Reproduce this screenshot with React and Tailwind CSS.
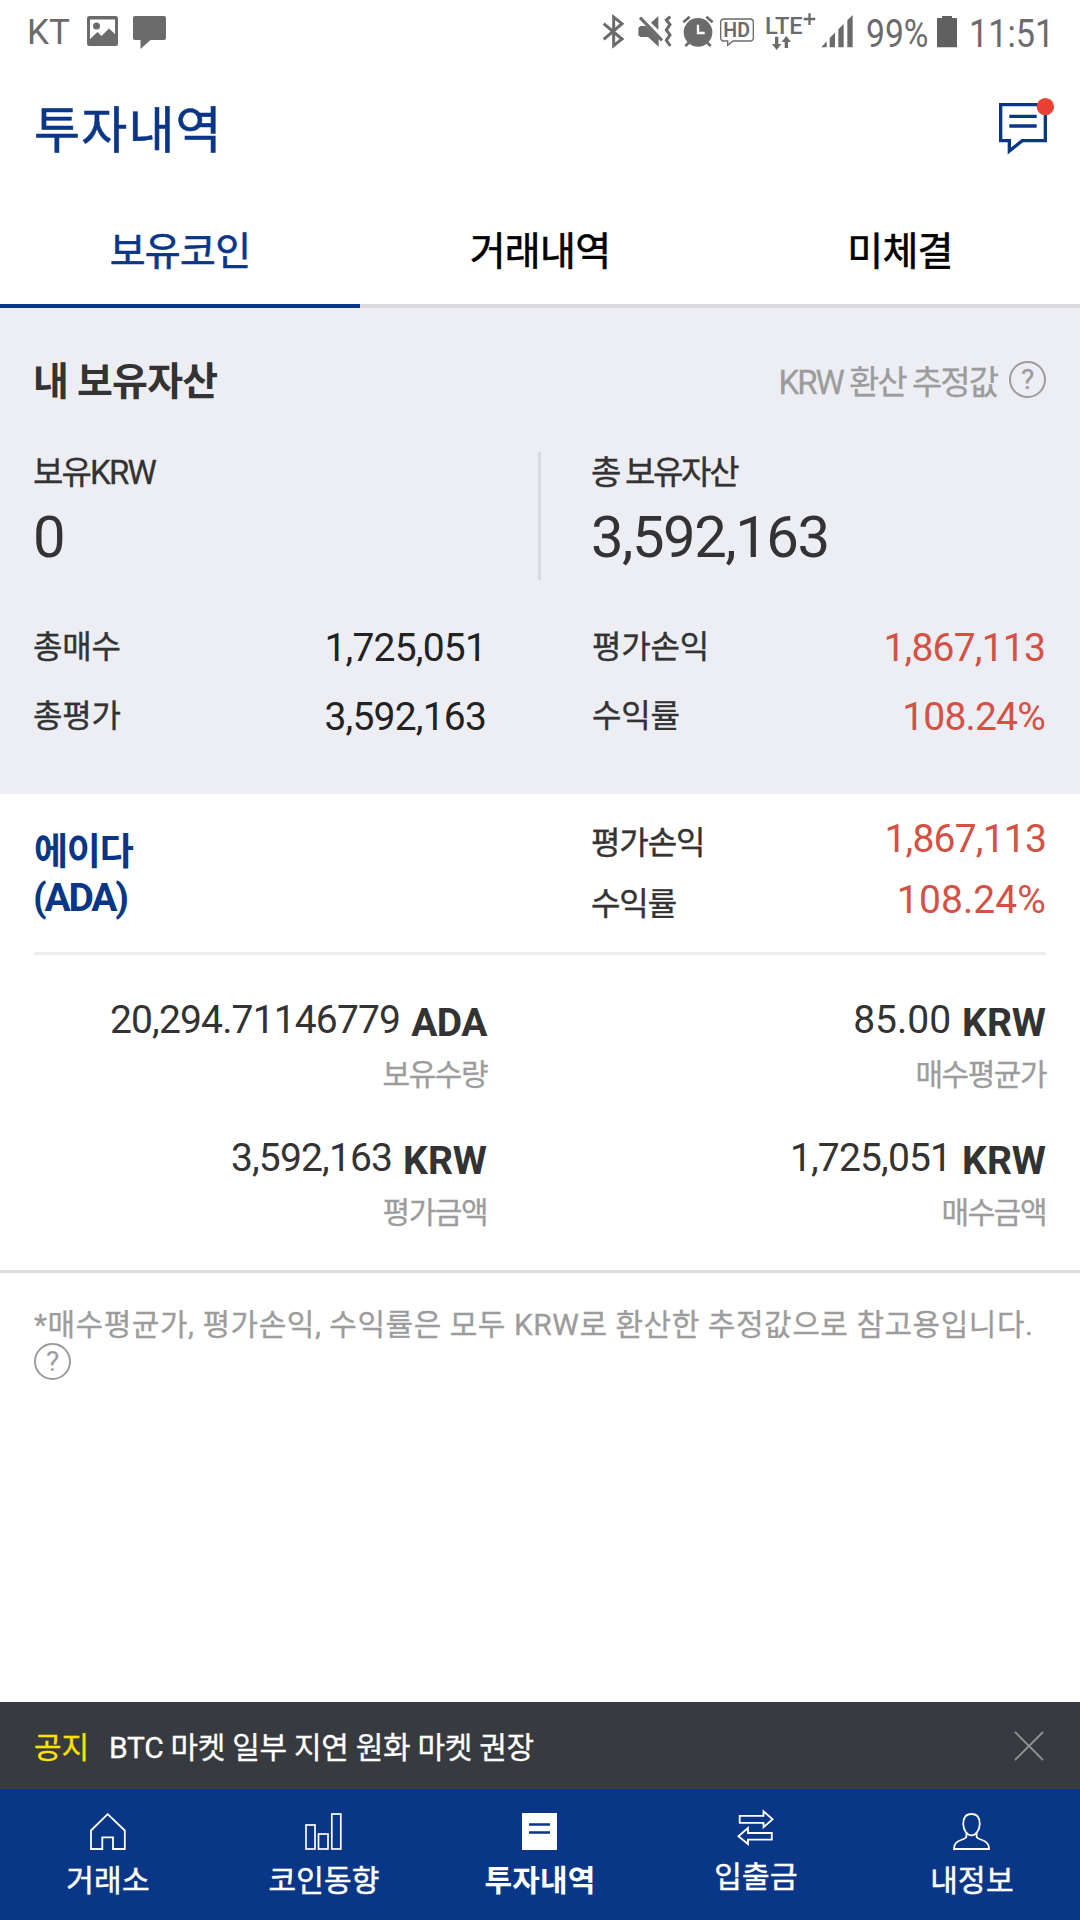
import React from "react";
import { useState } from "react";

const navItems = [
  { key: "exchange", label: "거래소", icon: HomeIcon },
  { key: "trend", label: "코인동향", icon: TrendIcon },
  { key: "invest", label: "투자내역", icon: InvestIcon },
  { key: "transfer", label: "입출금", icon: TransferIcon, raised: true },
  { key: "my", label: "내정보", icon: MyIcon },
];

const tabs = ["보유코인", "거래내역", "미체결"];

const amounts = [
  { value: "20,294.71146779", unit: "ADA", label: "보유수량", tight: true },
  { value: "85.00", unit: "KRW", label: "매수평균가" },
  { value: "3,592,163", unit: "KRW", label: "평가금액", tight: true },
  { value: "1,725,051", unit: "KRW", label: "매수금액", tight: true },
];

function HomeIcon() {
  return (
    <svg width="36" height="37" viewBox="0 0 36 37" fill="none" stroke="white" strokeWidth="1.8">
      <path d="M17.7 1.2 1 17.5V36H12.3V24.3H23V36H34.8V17.5Z" />
    </svg>
  );
}

function TrendIcon() {
  return (
    <svg width="37" height="37" viewBox="0 0 37 37" fill="none" stroke="white" strokeWidth="1.7">
      <rect x="1" y="12" width="9" height="24" />
      <rect x="13.5" y="21" width="9.5" height="15" />
      <rect x="26.8" y="1" width="9" height="35" />
    </svg>
  );
}

function InvestIcon() {
  return (
    <svg width="36" height="37" viewBox="0 0 36 37">
      <path d="M0 0H35V37H0Z" fill="white" />
      <path d="M7 11.5H28M7 19.5H28" stroke="#0a3687" strokeWidth="2.6" />
    </svg>
  );
}

function TransferIcon() {
  return (
    <svg width="37" height="37" viewBox="0 0 37 37" fill="none" stroke="white" strokeWidth="1.8">
      <path d="M2.7 6.8H26.5V2.3L35.6 10.3 26.5 18.2V13.8H2.7Z" />
      <path d="M34.8 24H11V19L1.4 27.2 11 35V30.6H34.8Z" />
    </svg>
  );
}

function MyIcon() {
  return (
    <svg width="37" height="37" viewBox="0 0 37 37" fill="none" stroke="white" strokeWidth="1.8">
      <path d="M18.5 1C24 1 27 4.5 26.8 11 26.5 17 23 22.3 18.5 22.3S10.5 17 10.2 11C10 4.5 13 1 18.5 1Z" />
      <path d="M13.4 20V23.5Q13.4 25.3 8 27 1 29 1 36H36Q36 29 29 27 23.6 25.3 23.6 23.5V20" />
    </svg>
  );
}

const Help = ({ className = "" }) => (
  <span
    className={
      "flex h-[37px] w-[37px] items-center justify-center rounded-full border-2 border-[#9c9c9c] text-[28px] leading-none text-[#9c9c9c] " +
      className
    }
  >
    ?
  </span>
);

const StatusBar = () => (
  <div className="flex h-16 items-start text-[#6b6b6b]">
    <span className="ml-[27px] w-[60px] text-[35px] leading-[65px]">KT</span>

    <svg className="mt-4" width="31" height="30" viewBox="0 0 31 30" fill="currentColor">
      <path
        fillRule="evenodd"
        d="M2.5 0H28.5Q31 0 31 2.5V27.5Q31 30 28.5 30H2.5Q0 30 0 27.5V2.5Q0 0 2.5 0ZM3 3.5V23L10.5 16 14.5 20 22 12.5 28 18V3.5Z"
      />
      <circle cx="9.5" cy="10" r="3.5" />
    </svg>

    <svg className="mt-4 ml-[15px]" width="33" height="33" viewBox="0 0 33 33" fill="currentColor">
      <path d="M2 0H31Q33 0 33 2V22Q33 24 31 24H17.5L7.5 33V24H2Q0 24 0 22V2Q0 0 2 0Z" />
    </svg>

    {/* bluetooth */}
    <svg className="ml-[435px]" width="24" height="60" viewBox="63 0 72 180" fill="none" stroke="currentColor" strokeWidth="9">
      <path d="M71 71 126 117 101 137V51L126 71 71 118" />
    </svg>

    {/* mute */}
    <svg className="ml-3" width="36" height="60" viewBox="171 0 108 180" fill="currentColor">
      <path d="M175 84 181 78H198L236 116V140L204 111H181L175 106Z" />
      <path d="M213 68 235 48V90Z" />
      <path
        d="M180 53 246 121M271 50 259 60 270 74 259 90 270 105 259 121 271 138"
        fill="none"
        stroke="currentColor"
        strokeWidth="9"
      />
    </svg>

    {/* alarm */}
    <svg className="ml-2" width="34" height="60" viewBox="303 0 102 180" fill="currentColor">
      <circle cx="354" cy="97" r="43" />
      <path
        d="M310 67 329 50M398 67 379 50M316 138 331 124M392 138 377 124"
        stroke="currentColor"
        strokeWidth="8"
      />
      <path d="M354 74V99H374" fill="none" stroke="white" strokeWidth="7" />
    </svg>

    {/* hd voice */}
    <svg className="ml-[5px]" width="34" height="60" viewBox="422 0 102 180" fill="currentColor">
      <path
        d="M434 57H512Q522 57 522 67V113Q522 123 512 123H461L445 136V123H434Q424 123 424 113V67Q424 57 434 57Z"
        fill="none"
        stroke="currentColor"
        strokeWidth="4"
      />
      <text x="432" y="111" textLength="80" lengthAdjust="spacingAndGlyphs" fontSize="60" fontWeight="600">
        HD
      </text>
    </svg>

    {/* network */}
    <svg className="ml-[10px]" width="52" height="60" viewBox="552 0 156 180" fill="currentColor">
      <text x="555" y="101" textLength="113" lengthAdjust="spacingAndGlyphs" fontSize="69" fontWeight="500">
        LTE
      </text>
      <path d="M671 57H706M688.5 40V75" stroke="currentColor" strokeWidth="7" />
      <path d="M585 110H595V132H604L590 150 576 132H585Z" />
      <path d="M614 144H624V126H633L619 108 605 126H614Z" />
    </svg>

    {/* signal */}
    <svg className="ml-[5px]" width="33" height="60" viewBox="723 0 99 180" fill="currentColor">
      <path d="M724 142 740 124V142ZM749 142V114L765 98V142ZM775 142V88L791 72V142ZM802 142V61L818 45V142Z" />
    </svg>

    <span className="ml-[12px] w-[71px] origin-left scale-x-[.885] whitespace-nowrap text-[38px] leading-[68px]">99%</span>

    <svg width="20" height="60" viewBox="1071 0 60 180" fill="#606060">
      <path d="M1086 48H1116V54H1131V142H1071V54H1086Z" />
    </svg>

    <span className="ml-[12px] origin-left scale-x-[.9] whitespace-nowrap text-[38px] leading-[68px]">11:51</span>
  </div>
);

const Stat = ({ label, value, up }) => (
  <div className="flex justify-between leading-[69px]">
    <span className="-ml-px text-[32px] tracking-[-0.2px] text-[#333] [-webkit-text-stroke:0.4px]">{label}</span>
    <span className={"pt-px text-[39px] leading-[68px] tracking-[-0.8px] " + (up ? "text-[#d45145]" : "text-[#222]")}>
      {value}
    </span>
  </div>
);

const App = () => {
  const [activeTab, setActiveTab] = useState("보유코인");
  const [activeNav, setActiveNav] = useState("invest");

  return (
    <div className="flex h-[1920px] w-[1080px] flex-col overflow-hidden bg-white font-[Roboto,'Noto_Sans_CJK_KR',sans-serif] text-[#333]">

      <StatusBar />

      <header className="flex h-[135px] justify-between pr-[25px] pl-[34px]">
        <h1 className="text-[50px] leading-[135px] tracking-[1.2px] text-[#0a3687] [-webkit-text-stroke:0.6px]">
          투자내역
        </h1>

        <svg className="mt-[33px]" width="56" height="58" viewBox="1257 291 168 174" fill="none" stroke="#0a3687" strokeWidth="10">
          <path d="M1262 314H1396V422H1327L1288 453V422H1262ZM1288 349H1370M1288 378H1370" />
          <circle cx="1396" cy="320" r="26" fill="#eb4034" stroke="none" />
        </svg>
      </header>

      <div className="grid h-[109px] grid-cols-3">
        {tabs.map((tab) => (
          <button
            key={tab}
            onClick={() => setActiveTab(tab)}
            className={
              "border-b-4 pt-[2px] text-[39px] leading-[103px] tracking-[-0.7px] [-webkit-text-stroke:0.6px] " +
              (tab === activeTab ? "border-[#0a3687] text-[#0a3687]" : "border-[#dcdcde] text-black")
            }
          >
            {tab}
          </button>
        ))}
      </div>

      <section className="h-[486px] bg-[#edeef4] px-[34px] pt-12">
        <div className="flex h-[53px] justify-between leading-[53px]">
          <h2 className="-ml-px text-[39px] font-bold tracking-[-0.8px]">내 보유자산</h2>
          <div className="flex text-[33px] tracking-[-2px] text-[#9c9c9c] [-webkit-text-stroke:0.3px]">
            KRW 환산 추정값
            <Help className="mt-[5px] ml-[12px] tracking-normal" />
          </div>
        </div>

        <div className="mt-[43px] flex h-[128px]">
          <div className="w-[507px] border-r-3 border-[#d9dadd]">
            <p className="-ml-px text-[33px] leading-[41px] tracking-[-1.8px] [-webkit-text-stroke:0.3px]">보유KRW</p>
            <p className="-ml-px mt-[6px] text-[58px] leading-[76px] tracking-[-1.4px]">0</p>
          </div>
          <div className="pl-[50px]">
            <p className="text-[33px] leading-[41px] tracking-[-2.3px] [-webkit-text-stroke:0.4px]">총 보유자산</p>
            <p className="mt-[6px] text-[58px] leading-[76px] tracking-[-1.5px]">3,592,163</p>
          </div>
        </div>

        <div className="mt-[33px] grid grid-cols-[452px_452px] gap-x-[107px]">
          <Stat label="총매수" value="1,725,051" />
          <Stat label="평가손익" value="1,867,113" up />
          <Stat label="총평가" value="3,592,163" />
          <Stat label="수익률" value="108.24%" up />
        </div>
      </section>

      <section className="border-b-3 border-[#dcdcdc]">
        <div className="mx-[34px] grid h-[161px] grid-cols-[454px_455px] gap-x-[103px] border-b-3 border-[#ededed]">
          <div className="pt-9 font-bold leading-[45px] text-[#0a3687]">
            <p className="text-[37px] tracking-[-1.2px]">에이다</p>
            <p className="-ml-px pt-px text-[39px] tracking-[-2.2px]">(ADA)</p>
          </div>

          <div className="pt-4">
            <div className="flex h-[61px] justify-between">
              <span className="text-[32px] leading-[66px] tracking-[-1.1px] [-webkit-text-stroke:0.4px]">평가손익</span>
              <span className="text-[39px] leading-[58px] tracking-[-0.8px] text-[#d45145]">1,867,113</span>
            </div>
            <div className="flex h-[61px] justify-between">
              <span className="text-[32px] leading-[66px] tracking-[-1.1px] [-webkit-text-stroke:0.4px]">수익률</span>
              <span className="text-[39px] leading-[58px] tracking-[0.1px] text-[#d45145]">108.24%</span>
            </div>
          </div>
        </div>

        <div className="mx-[34px] grid grid-cols-[453px_456px] gap-x-[103px] gap-y-[29px] pt-[35px] pb-[33px]">
          {amounts.map((item) => (
            <div key={item.label} className="text-right">
              <div className="flex h-[60px] justify-end text-[39px]">
                <span className={"leading-[61px] " + (item.tight ? "tracking-[-0.85px]" : "")}>
                  {item.value}
                </span>
                <span
                  className={
                    "ml-[11px] font-bold leading-[66px] " +
                    (item.unit === "ADA" ? "tracking-[-0.5px]" : "")
                  }
                >
                  {item.unit}
                </span>
              </div>
              <p className="text-[30px] leading-[49px] tracking-[-1.5px] text-[#9c9c9c] [-webkit-text-stroke:0.3px]">
                {item.label}
              </p>
            </div>
          ))}
        </div>
      </section>

      <div className="px-[34px] pt-[33px] text-[#9c9c9c]">
        <p className="whitespace-nowrap text-[30px] leading-[38px] tracking-[0.52px] [-webkit-text-stroke:0.3px]">
          *매수평균가, 평가손익, 수익률은 모두 KRW로 환산한 추정값으로 참고용입니다.
        </p>
        <Help className="-mt-px" />
      </div>

      <div className="mt-auto flex h-[87px] bg-[#373a3e] pr-9 pl-[34px] text-[30px] leading-[91px] [-webkit-text-stroke:0.3px]">
        <span className="w-[75px] text-[#ffe100]">공지</span>
        <span className="grow tracking-[-0.3px] text-white">BTC 마켓 일부 지연 원화 마켓 권장</span>
        <svg className="mt-[29px]" width="30" height="30" viewBox="0 0 30 30" stroke="#929394" strokeWidth="1.8">
          <path d="M1 1 29 29M29 1 1 29" />
        </svg>
      </div>

      <nav className="grid h-[131px] grid-cols-5 bg-[#0a3687] text-white">
        {navItems.map((item) => (
          <button
            key={item.key}
            onClick={() => setActiveNav(item.key)}
            className={"flex flex-col items-center pr-px " + (item.raised ? "pt-[20px]" : "pt-6")}
          >
            <item.icon />
            <span
              className={
                "mt-3 ml-px text-[30px] leading-[38px] " +
                (item.key === activeNav ? "font-bold tracking-[0.2px]" : "tracking-[0.2px] [-webkit-text-stroke:0.5px]")
              }
            >
              {item.label}
            </span>
          </button>
        ))}
      </nav>

    </div>
  );
};

export default App;
